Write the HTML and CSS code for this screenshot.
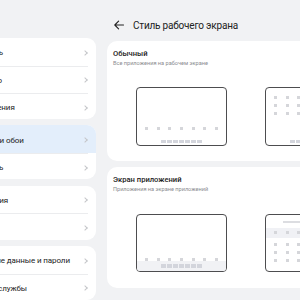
FILE: index.html
```html
<!DOCTYPE html>
<html lang="ru">
  <head>
    <meta charset="UTF-8" />
    <meta name="viewport" content="width=device-width, initial-scale=1.0" />
    <title>Стиль рабочего экрана</title>
    <link rel="stylesheet" href="styles.css">
  </head>
  <body>
    <div class="screen">
      <!-- список настроек (прокручен влево) -->
      <aside class="sidebar">
        <div class="group">
          <div class="row"><span>Мобильная сеть</span><i class="chev"></i></div>
          <div class="row"><span>Мое устройство</span><i class="chev"></i></div>
          <div class="row"><span>Другие соединения</span><i class="chev"></i></div>
        </div>
        <div class="group">
          <div class="row selected"><span>Рабочий экран и обои</span><i class="chev"></i></div>
          <div class="row"><span>Экран и яркость</span><i class="chev"></i></div>
        </div>
        <div class="group">
          <div class="row"><span>Звуки и вибрация</span><i class="chev"></i></div>
          <div class="row"><span>Уведомления</span><i class="chev"></i></div>
        </div>
        <div class="group">
          <div class="row"><span>Биометрические данные и пароли</span><i class="chev"></i></div>
          <div class="row"><span>Приложения и службы</span><i class="chev"></i></div>
        </div>
      </aside>

      <main class="pane">
        <header class="top-bar">
          <svg class="back" width="10" height="10" viewBox="0 0 10 10">
            <path d="M9.5 5H0.8M4.6 1.2L0.8 5L4.6 8.8" fill="none" stroke="#222" stroke-width="1.1" stroke-linecap="round" stroke-linejoin="round" />
          </svg>
          <h1>Стиль рабочего экрана</h1>
        </header>

        <section class="card">
          <div class="card-title">Обычный</div>
          <div class="card-sub">Все приложения на рабочем экране</div>
          <div class="previews">
            <div class="frame">
              <div class="dots"><b></b><b></b><b></b><b></b><b></b><b></b><b></b></div>
              <div class="dock"><b></b><b></b><b></b><b></b><b></b><b></b><b></b></div>
            </div>
            <div class="frame frame-grid">
              <div class="dots"><b></b><b></b><b></b><b></b><b></b><b></b><b></b></div>
              <div class="dots"><b></b><b></b><b></b><b></b><b></b><b></b><b></b></div>
              <div class="dots"><b></b><b></b><b></b><b></b><b></b><b></b><b></b></div>
              <div class="dock"><b></b><b></b><b></b><b></b><b></b><b></b><b></b></div>
            </div>
          </div>
        </section>

        <section class="card">
          <div class="card-title">Экран приложений</div>
          <div class="card-sub">Приложения на экране приложений</div>
          <div class="previews">
            <div class="frame frame-short">
              <div class="dots"><b></b><b></b><b></b><b></b><b></b><b></b><b></b></div>
              <div class="dock-band">
                <div class="dock"><b></b><b></b><b></b><b></b><b></b><b></b><b></b></div>
              </div>
            </div>
            <div class="frame frame-short frame-drawer">
              <div class="search"></div>
              <div class="recent">
                <div class="dots"><b></b><b></b><b></b><b></b><b></b><b></b><b></b></div>
              </div>
              <div class="dots"><b></b><b></b><b></b><b></b><b></b><b></b><b></b></div>
              <div class="dots"><b></b><b></b><b></b><b></b><b></b><b></b><b></b></div>
              <div class="dots"><b></b><b></b><b></b><b></b><b></b><b></b><b></b></div>
            </div>
          </div>
        </section>
      </main>
    </div>
  </body>
</html>
```

FILE: styles.css
```css
body {
  margin: 0;
  font-family: "Roboto", "Noto Sans", sans-serif;
  background-color: #f1f2f4;
  color: #222;
  overflow: hidden;
}

.screen {
  display: flex;
  width: 300px;
  height: 300px;
  overflow: hidden;
}

/* левая колонка */
.sidebar {
  flex: none;
  width: 160px;
  margin-left: -64px;
  padding-top: 38px;
  display: flex;
  flex-direction: column;
  gap: 6.5px;
}

.group {
  background: #ffffff;
  border-radius: 9px;
  overflow: hidden;
}

.row {
  height: 27.5px;
  display: flex;
  align-items: center;
  justify-content: space-between;
  padding: 2px 8px 0 7px;
  box-sizing: border-box;
  font-size: 8px;
  letter-spacing: -0.1px;
  white-space: nowrap;
  position: relative;
}

.row + .row::before {
  content: "";
  position: absolute;
  top: 0;
  left: 7px;
  right: 8px;
  height: 1px;
  background: #ebecee;
}

.row.selected {
  background: #e3eefb;
}

.chev {
  flex: none;
  width: 3px;
  height: 3px;
  border-top: 1px solid #c4c5c8;
  border-right: 1px solid #c4c5c8;
  transform: rotate(45deg);
  margin-right: 1px;
}

/* правая часть */
.pane {
  flex: none;
  width: 260px;
  padding-left: 11px;
}

.top-bar {
  display: flex;
  align-items: center;
  gap: 9px;
  height: 14px;
  padding: 18px 0 0 7px;
  margin-bottom: 9px;
}

.top-bar h1 {
  margin: 0;
  font-size: 10px;
  letter-spacing: -0.2px;
  font-weight: 400;
  color: #222;
}

.card {
  background: #ffffff;
  border-radius: 10px;
  padding: 7px 6px 15px;
  margin-bottom: 6px;
}

.card + .card {
  padding-bottom: 16px;
}

.card-title {
  font-size: 7.6px;
  line-height: 11px;
  font-weight: 500;
  color: #222;
}

.card-sub {
  font-size: 5.6px;
  line-height: 9px;
  color: #8a8b8f;
}

.previews {
  display: flex;
  gap: 38px;
  padding-left: 23px;
  margin-top: 19px;
}

.card + .card .previews {
  margin-top: 20px;
}

.frame {
  width: 91px;
  height: 59px;
  box-sizing: border-box;
  border: 1.5px solid #4d4d4f;
  border-radius: 4px;
  display: flex;
  flex-direction: column;
  justify-content: flex-end;
  padding-bottom: 2px;
  overflow: hidden;
}

.frame-short {
  height: 58px;
  padding-bottom: 0;
}

.dots {
  display: flex;
  justify-content: space-between;
  padding: 0 8px;
}

.dots b {
  width: 3px;
  height: 3px;
  background: #d5d6da;
}

.frame > .dots {
  margin-bottom: 9.5px;
}

.dock {
  align-self: center;
  display: flex;
  gap: 1.5px;
}

.dock b {
  width: 4.5px;
  height: 3.5px;
  background: #d3d5dc;
}

.frame-grid {
  justify-content: flex-start;
  padding-top: 7.5px;
}

.frame-grid > .dots {
  margin-bottom: 5px;
}

.frame-grid .dock {
  margin-top: auto;
}

.dock-band {
  display: flex;
  justify-content: center;
  align-items: center;
  height: 10.5px;
  background: #f1f2f5;
  margin-top: -5px;
}

.frame-short > .dots {
  margin-bottom: 5px;
}

.frame-drawer {
  justify-content: flex-start;
  padding-top: 5.5px;
}

.search {
  align-self: center;
  width: 55px;
  height: 2px;
  background: #dcdde1;
  margin-bottom: 5px;
}

.recent {
  background: #f0f1f5;
  padding: 3.5px 0;
  margin-bottom: 5.5px;
}

.frame-drawer > .dots {
  margin-bottom: 5px;
}
```
